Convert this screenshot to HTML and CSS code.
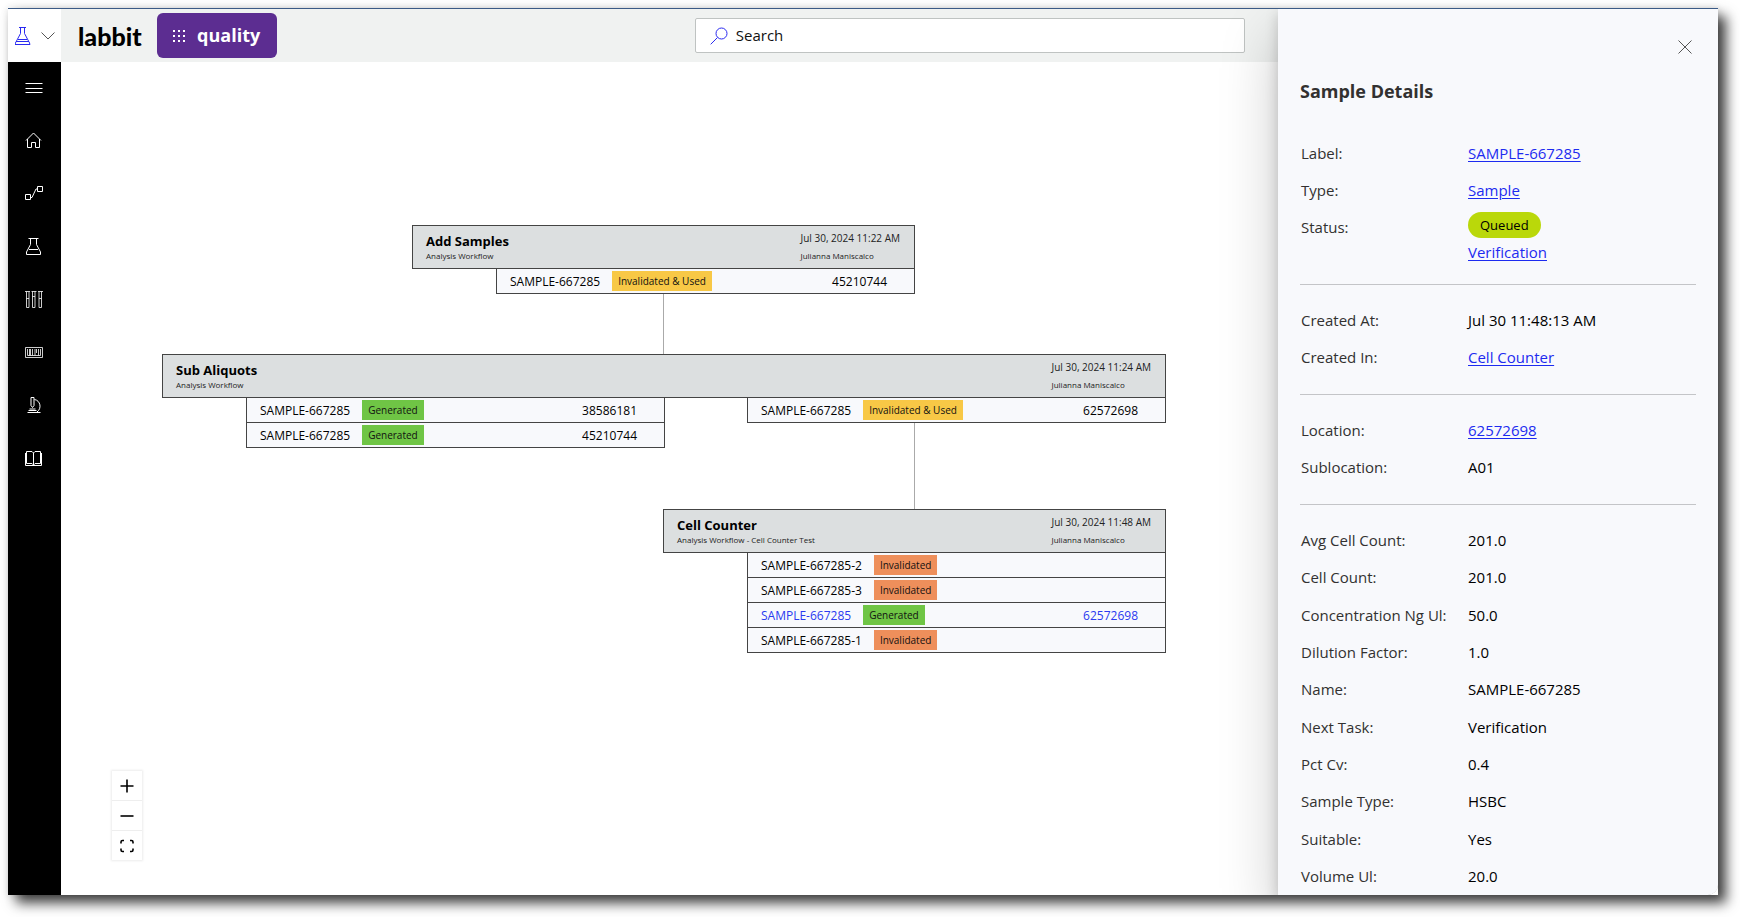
FILE: index.html
```
<!DOCTYPE html>
<html lang="en">
<head>
<meta charset="utf-8">
<title>labbit – Sample Details</title>
<link rel="stylesheet" href="styles.css">
</head>
<body>
<div class="window">
  <header class="topbar">
    <button class="switcher" aria-label="Switch app">
      <svg class="switcher-flask" viewBox="0 0 16 18" width="16" height="18"><path d="M4 .5h7M5.500 .5v6L1.500 14M9.500 .5v6L13.500 14M3 12.500h9M1 14.500h13l1 3H0z"/></svg>
      <svg class="switcher-chevron" viewBox="0 0 14 8" width="14" height="8"><path d="M.5 .5L7 7L13.500 .5"/></svg>
    </button>
    <span class="brand">labbit</span>
    <button class="quality">
      <svg viewBox="0 0 12 12" width="12" height="12"><path d="M0 0h2v2H0zM5 0h2v2H5zM10 0h2v2h-2zM0 5h2v2H0zM5 5h2v2H5zM10 5h2v2h-2zM0 10h2v2H0zM5 10h2v2H5zM10 10h2v2h-2z"/></svg>
      quality
    </button>
    <label class="search">
      <svg viewBox="0 0 18 18" width="18" height="18"><circle cx="11.500" cy="6.500" r="5.500"/><path d="M7.500 10.500L.7 17.300"/></svg>
      <input type="text" placeholder="Search" aria-label="Search">
    </label>
    <div class="topbar-end"></div>
  </header>

  <div class="body">
    <nav class="sidebar">
      <button aria-label="Menu"><svg viewBox="0 0 18 18"><path d="M.5 4.500h17M.5 9.500h17M.5 13.500h17"/></svg></button>
      <a href="#" aria-label="Home"><svg viewBox="0 0 18 18"><path d="M1 9.500L8.500 2L16 9.500M2.500 8v8.500h4v-5h4v5h4V8"/></svg></a>
      <a href="#" aria-label="Workflows"><svg viewBox="0 0 18 18"><path d="M.5 10.500h5v5h-5zM12.500 2.500h5v5h-5zM5.500 13.500h1.500L11 5h1.500"/></svg></a>
      <a href="#" aria-label="Experiments"><svg viewBox="0 0 18 18"><path d="M3.500 1.500h10M5.500 1.500v6L1.500 15v2.500h14V15l-4-7.500v-6M4 12.500h9"/></svg></a>
      <a href="#" aria-label="Samples"><svg viewBox="0 0 18 18"><path class="thin" d="M0 1.500h5M6.500 1.500h5M13 1.500h5M1.500 1.500v16h2.500v-16M7.500 1.500v16h2.500v-16M14 1.500v16h2.500v-16M1.500 8.500h2.500M7.500 6.500h2.500M14 8.500h2.500"/></svg></a>
      <a href="#" aria-label="Barcodes"><svg viewBox="0 0 18 18"><path class="thin" d="M.5 4.500h17v10h-17zM2.500 6v6.500M4.500 6v6.500M5.500 6v6.500M7.500 6v6.500M10 6v6.500M11.500 6v4M13.500 6v6.500M15.500 6v6.500M2.500 12.500h13"/></svg></a>
      <a href="#" aria-label="Instruments"><svg viewBox="0 0 18 18"><path d="M6 1.500h3v8l-1.500 2L6 9.500zM9.500 3.500c6 1 7.500 9 2.500 12.500M4.500 13h6M2.500 16.500h13M3.500 14.500h8"/></svg></a>
      <a href="#" aria-label="Library"><svg viewBox="0 0 18 18"><path d="M1.500 2.500H7L8.500 4L10 2.500h5.500v12H10L8.500 16L7 14.500H1.500zM8.500 4v12M.5 4v12.500H16.500V4"/></svg></a>
    </nav>

    <main class="canvas">
      <div class="link link-a"></div>
      <div class="link link-b"></div>

      <section class="node node-add">
        <div class="node-head">
          <div><h2>Add Samples</h2><p>Analysis Workflow</p></div>
          <div class="meta"><time>Jul 30, 2024 11:22 AM</time><p>Julianna Maniscalco</p></div>
        </div>
        <div class="groups">
          <ul><li>SAMPLE-667285<span class="tag used">Invalidated &amp; Used</span><b>45210744</b></li></ul>
        </div>
      </section>

      <section class="node node-sub">
        <div class="node-head">
          <div><h2>Sub Aliquots</h2><p>Analysis Workflow</p></div>
          <div class="meta"><time>Jul 30, 2024 11:24 AM</time><p>Julianna Maniscalco</p></div>
        </div>
        <div class="groups">
          <ul>
            <li>SAMPLE-667285<span class="tag generated">Generated</span><b>38586181</b></li>
            <li>SAMPLE-667285<span class="tag generated">Generated</span><b>45210744</b></li>
          </ul>
          <ul><li>SAMPLE-667285<span class="tag used">Invalidated &amp; Used</span><b>62572698</b></li></ul>
        </div>
      </section>

      <section class="node node-cell">
        <div class="node-head">
          <div><h2>Cell Counter</h2><p>Analysis Workflow - Cell Counter Test</p></div>
          <div class="meta"><time>Jul 30, 2024 11:48 AM</time><p>Julianna Maniscalco</p></div>
        </div>
        <div class="groups">
          <ul>
            <li>SAMPLE-667285-2<span class="tag invalid">Invalidated</span></li>
            <li>SAMPLE-667285-3<span class="tag invalid">Invalidated</span></li>
            <li class="current">SAMPLE-667285<span class="tag generated">Generated</span><b>62572698</b></li>
            <li>SAMPLE-667285-1<span class="tag invalid">Invalidated</span></li>
          </ul>
        </div>
      </section>

      <div class="zoom">
        <button aria-label="Zoom in"><svg viewBox="0 0 14 14"><path d="M7 .5v13M.5 7h13"/></svg></button>
        <button aria-label="Zoom out"><svg viewBox="0 0 14 14"><path d="M.5 7h13"/></svg></button>
        <button aria-label="Fit view"><svg viewBox="0 0 14 14"><path d="M1 4.500V3Q1 1.500 2.500 1.500H4M10 1.500h1.500Q13 1.500 13 3v1.500M13 9.500V11q0 1.500-1.500 1.500H10M4 12.500H2.500Q1 12.500 1 11V9.500"/></svg></button>
      </div>
    </main>
  </div>

  <aside class="drawer">
    <button class="close" aria-label="Close"><svg viewBox="0 0 14 14" width="14" height="14"><path d="M.5 .5l13 13M13.500 .5l-13 13"/></svg></button>
    <h1>Sample Details</h1>
    <dl>
      <div><dt>Label:</dt><dd><a href="#">SAMPLE-667285</a></dd></div>
      <div><dt>Type:</dt><dd><a href="#">Sample</a></dd></div>
      <div><dt>Status:</dt><dd class="status"><span class="pill">Queued</span><a href="#">Verification</a></dd></div>
    </dl>
    <dl>
      <div><dt>Created At:</dt><dd>Jul 30 11:48:13 AM</dd></div>
      <div><dt>Created In:</dt><dd><a href="#">Cell Counter</a></dd></div>
    </dl>
    <dl>
      <div><dt>Location:</dt><dd><a href="#">62572698</a></dd></div>
      <div><dt>Sublocation:</dt><dd>A01</dd></div>
    </dl>
    <dl class="fill">
      <div><dt>Avg Cell Count:</dt><dd>201.0</dd></div>
      <div><dt>Cell Count:</dt><dd>201.0</dd></div>
      <div><dt>Concentration Ng Ul:</dt><dd>50.0</dd></div>
      <div><dt>Dilution Factor:</dt><dd>1.0</dd></div>
      <div><dt>Name:</dt><dd>SAMPLE-667285</dd></div>
      <div><dt>Next Task:</dt><dd>Verification</dd></div>
      <div><dt>Pct Cv:</dt><dd>0.4</dd></div>
      <div><dt>Sample Type:</dt><dd>HSBC</dd></div>
      <div><dt>Suitable:</dt><dd>Yes</dd></div>
      <div><dt>Volume Ul:</dt><dd>20.0</dd></div>
    </dl>
  </aside>
</div>
</body>
</html>
```
FILE: styles.css
```
* { box-sizing: border-box; }
body {
  margin: 0;
  height: 100vh;
  padding: 8px 22px 22px 8px;
  overflow: hidden;
  background: #fff;
  color: #000;
  font: 15px/21px "Open Sans", "Noto Sans", sans-serif;
}
h1, h2, p, ul, dl, dd { margin: 0; padding: 0; }
button { border: 0; padding: 0; background: none; font: inherit; color: inherit; cursor: pointer; }
svg { fill: none; stroke: currentColor; flex: none; }

.window {
  position: relative;
  display: flex;
  flex-direction: column;
  height: 100%;
  border-top: 1px solid #3b5a86;
  background: #1c1c1c;
  box-shadow: 8px 8px 12px rgba(0, 0, 0, .75), 0 0 8px rgba(0, 0, 0, .12);
}

/* Top bar */
.topbar { display: flex; align-items: center; height: 53px; background: #f0f2f1; }
.switcher {
  display: flex;
  align-items: center;
  justify-content: center;
  gap: 10px;
  width: 53px;
  height: 100%;
  background: #fff;
}
.switcher-flask { color: #2a2af0; }
.switcher-chevron { color: #555; }
.brand { margin: 0 15px 0 17px; font: 900 25px/30px Lato, sans-serif; }
.quality {
  display: flex;
  align-items: center;
  justify-content: center;
  gap: 12px;
  width: 120px;
  height: 45px;
  border-radius: 6px;
  background: #5c2d91;
  color: #fff;
  font-size: 18px;
  font-weight: 700;
}
.quality svg { fill: currentColor; stroke: none; }
.search {
  display: flex;
  align-items: center;
  gap: 8px;
  flex: 0 1 550px;
  height: 35px;
  margin: 0 auto;
  padding: 0 14px;
  border: 1px solid #bfc3c2;
  border-radius: 2px;
  background: #fff;
}
.search svg { color: #2a2af0; }
.search input { flex: 1; min-width: 0; border: 0; outline: 0; padding: 0; background: none; font: inherit; }
.search input::placeholder { color: #111; opacity: 1; }
.topbar-end { width: 55px; }

/* Sidebar */
.body { display: flex; flex: 1; min-height: 0; }
.sidebar { display: flex; flex-direction: column; width: 53px; padding-right: 1px; background: #000; color: #fff; }
.sidebar > * { display: flex; align-items: center; justify-content: center; height: 53px; color: inherit; }
.sidebar > button { height: 51px; }
.sidebar svg { width: 18px; height: 18px; }
.sidebar .thin { stroke-width: .8; }

/* Diagram */
.canvas { position: relative; flex: 1; min-width: 0; overflow: hidden; background: #fff; }
.link { position: absolute; width: 1px; background: #aaa; }
.link-a { left: 602px; top: 232px; height: 60px; }
.link-b { left: 853px; top: 361px; height: 86px; }
.node { position: absolute; width: 503px; }
.node-add { left: 351px; top: 163px; }
.node-sub { left: 101px; top: 292px; width: 1004px; }
.node-cell { left: 602px; top: 447px; }
.node-head {
  display: flex;
  justify-content: space-between;
  height: 44px;
  padding: 6px 14px 0 13px;
  border: 1px solid #444;
  background: #dcdfe0;
  white-space: nowrap;
}
.node-head h2 { font-size: 13px; line-height: 18px; }
.node-head p { color: #222; font-size: 8px; line-height: 12px; }
.meta time { display: block; color: #222; font-size: 10px; line-height: 13px; }
.meta p { padding-top: 5px; }
.groups { display: flex; justify-content: space-between; padding-left: 84px; }
.groups ul { width: 419px; list-style: none; }
.groups li {
  display: flex;
  align-items: center;
  gap: 12px;
  height: 26px;
  margin-top: -1px;
  padding: 0 27px 0 13px;
  border: 1px solid #444;
  background: #f8f9fc;
  font-size: 12px;
  white-space: nowrap;
}
.groups b { margin-left: auto; font-weight: 400; }
.groups .current { color: #2a3af0; }
.tag { padding: 0 6px; color: #111; font-size: 10px; line-height: 20px; }
.used { background: #f8c846; }
.generated { background: #6fc545; }
.invalid { background: #ee8f5b; }

.zoom {
  position: absolute;
  left: 51px;
  bottom: 35px;
  display: flex;
  flex-direction: column;
  gap: 1px;
  background: #eee;
  box-shadow: 0 0 2px 1px rgba(0, 0, 0, .08);
}
.zoom button { display: flex; align-items: center; justify-content: center; width: 30px; height: 29px; background: #fff; }
.zoom svg { width: 14px; height: 14px; stroke-width: 1.600; }

/* Details drawer lies over the top bar and the diagram */
.drawer {
  position: absolute;
  top: 0;
  right: 0;
  bottom: 0;
  display: flex;
  flex-direction: column;
  width: 440px;
  padding: 31px 22px 0;
  border-bottom-right-radius: 10px;
  background: #f8f9fc;
  color: #000;
  box-shadow: 0 26px 58px rgba(0, 0, 0, .22), 0 5px 14px rgba(0, 0, 0, .18);
  clip-path: inset(0 0 0 -90px round 0 0 10px 0);
}
.close { display: flex; align-self: flex-end; padding: 0 4px 0; color: #555; }
.drawer h1 { padding: 25px 0 33px; color: #323130; font-size: 18px; line-height: 24px; }
.drawer dl { display: flex; flex-direction: column; gap: 16px; padding: 25px 0 26px; border-bottom: 1px solid #c4c5c8; }
.drawer h1 + dl { padding: 7px 0 21px; }
.drawer dl > div { display: grid; grid-template-columns: 167px 1fr; padding-left: 1px; }
.drawer dt { color: #323130; }
.drawer a { color: #1d2bf0; text-underline-offset: 2px; }
.drawer .fill { flex: 1; justify-content: space-between; gap: 0; padding-bottom: 8px; border: 0; }
.status { display: flex; flex-direction: column; align-items: flex-start; gap: 4px; }
.pill { margin-top: -5px; padding: 0 12px; border-radius: 13px; background: #bad80a; font-size: 13px; line-height: 26px; }
```
